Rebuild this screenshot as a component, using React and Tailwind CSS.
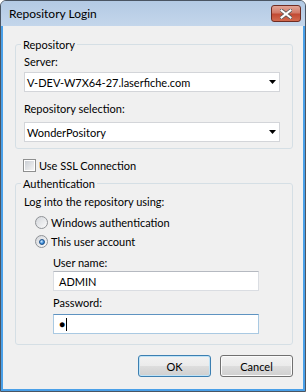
import React from 'react';

const Combo = ({ value, className = '' }) => (
  <div className={`flex h-[20px] w-[256px] items-center justify-between border border-[#d3d5d9] bg-white pl-[2px] pr-[3px] ${className}`}>
    <span className="leading-[15px]">{value}</span>
    <svg width="7" height="4" viewBox="0 0 7 4">
      <path d="M0 0h7L3.5 4z" fill="#000" />
    </svg>
  </div>
);

const Radio = ({ checked, label, className = '' }) => (
  <div className={`flex h-[15px] items-center gap-[3px] ${className}`}>
    <div className="flex h-[13px] w-[13px] items-center justify-center rounded-full border border-[#8f9296] bg-[linear-gradient(135deg,#d3d6db,#fbfbfb)]">
      {checked && (
        <div className="h-[6px] w-[6px] rounded-full border border-[#1b4f87] bg-[radial-gradient(circle_at_35%_35%,#cde8ff,#3b8ddb_60%,#1d5fa8)]" />
      )}
    </div>
    <span className="leading-[15px]">{label}</span>
  </div>
);

const Button = ({ children, isDefault }) => (
  <button
    className={`flex h-[22px] w-[73px] items-center justify-center rounded-[3px] border bg-[linear-gradient(#f2f2f2,#ebebeb_48%,#dddddd_52%,#cfcfcf)] leading-[15px] ${
      isDefault ? 'border-[#3c7fb1] shadow-[inset_0_0_0_1px_#bfe3f7]' : 'border-[#707070] shadow-[inset_0_0_0_1px_#fbfbfb]'
    }`}
  >
    {children}
  </button>
);

export default function App() {
  return (
    <div className="h-[392px] w-[306px] font-['Lato',sans-serif] text-[11px] text-black">
      <div className="flex h-full flex-col overflow-hidden rounded-t-[6px] border border-[#4a5563] bg-[#bcd1e9]">
        {/* Title bar */}
        <div className="flex h-[25px] items-center justify-between bg-[linear-gradient(#b3cae4,#c4d6eb)] pl-[8px] pr-[4px]">
          <span className="text-[12px] leading-[15px]">Repository Login</span>
          <div className="flex h-[17px] w-[30px] items-center justify-center rounded-[3px] border border-[#6f2c22] bg-[linear-gradient(#e2a597,#d27a68_45%,#c24a33_55%,#d26a4f)]">
            <svg width="12" height="10" viewBox="0 0 12 10">
              <path d="M1.5 1.5l9 7M10.5 1.5l-9 7" stroke="#5a5a5a" strokeWidth="3.6" strokeLinecap="square" />
              <path d="M1.5 1.5l9 7M10.5 1.5l-9 7" stroke="#fff" strokeWidth="2" strokeLinecap="square" />
            </svg>
          </div>
        </div>

        {/* Body */}
        <div className="flex flex-1 flex-col border-x-2 border-b-2 border-[#4aa0e8] bg-[#f0f0f0] pl-[12px] pr-[10px]">
          <fieldset className="mt-[11px] rounded-[3px] border border-[#d5dfe5]">
            <legend className="ml-[5px] px-[2px] leading-[15px]">Repository</legend>
            <div className="flex flex-col pb-[6px] pl-[8px]">
              <span className="mt-[2px] leading-[15px]">Server:</span>
              <Combo className="mt-[3px]" value="V-DEV-W7X64-27.laserfiche.com" />
              <span className="mt-[9px] leading-[15px]">Repository selection:</span>
              <Combo className="mt-[6px]" value="WonderPository" />
            </div>
          </fieldset>

          <div className="ml-[8px] mt-[9px] flex h-[15px] items-center gap-[3px]">
            <div className="h-[13px] w-[13px] border border-[#8e8f8f] bg-white p-[1px]">
              <div className="h-full w-full bg-[linear-gradient(135deg,#cbcfd5,#f4f4f4)]" />
            </div>
            <span className="leading-[15px]">Use SSL Connection</span>
          </div>

          <fieldset className="mt-[3px] rounded-[3px] border border-[#d5dfe5]">
            <legend className="ml-[5px] px-[2px] leading-[15px]">Authentication</legend>
            <div className="flex flex-col pb-[10px] pl-[8px]">
              <span className="mt-[3px] leading-[15px]">Log into the repository using:</span>
              <Radio className="ml-[11px] mt-[6px]" label="Windows authentication" />
              <Radio className="ml-[11px] mt-[4px]" label="This user account" checked />
              <span className="ml-[29px] mt-[6px] leading-[15px]">User name:</span>
              <div className="ml-[29px] mt-[1px] flex h-[20px] w-[206px] items-center border border-[#dadde2] border-t-[#b5b9c0] bg-white pl-[5px]">
                <span className="leading-[15px]">ADMIN</span>
              </div>
              <span className="ml-[29px] mt-[4px] leading-[15px]">Password:</span>
              <div className="ml-[29px] mt-[4px] flex h-[20px] w-[206px] items-center border border-[#a9c9e2] border-t-[#5e93c1] bg-white pl-[5px]">
                <span className="text-[10px] leading-[15px]">●</span>
                <div className="ml-[1px] h-[13px] w-[1px] bg-black" />
              </div>
            </div>
          </fieldset>

          <div className="mt-[10px] flex justify-end gap-[9px]">
            <Button isDefault>OK</Button>
            <Button>Cancel</Button>
          </div>
        </div>
      </div>
    </div>
  );
}
